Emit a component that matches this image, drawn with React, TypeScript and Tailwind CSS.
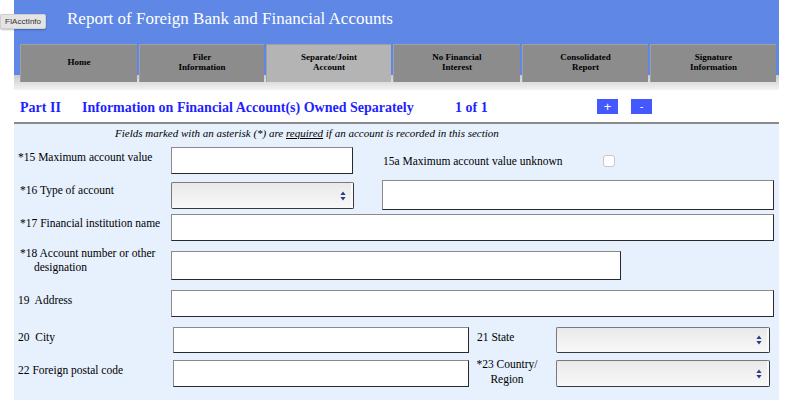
import React from 'react';

const tabs = [
  { label: ['Home'], w: 'w-[117px]' },
  { label: ['Filer', 'Information'], w: 'w-[125px]' },
  { label: ['Separate/Joint', 'Account'], w: 'w-[125px]', active: true },
  { label: ['No Financial', 'Interest'], w: 'w-[127px]' },
  { label: ['Consolidated', 'Report'], w: 'w-[126px]' },
  { label: ['Signature', 'Information'], w: 'w-[126px]' },
];

const TextBox = ({ className }: { className: string }) => (
  <div
    className={`bg-white border border-t-[#8a8a8a] border-l-[#8a8a8a] border-r-[#2a2a2a] border-b-[#2a2a2a] ${className}`}
  />
);

const SelectBox = ({ className }: { className: string }) => (
  <div
    className={`flex items-center justify-end pr-[7px] rounded-[2px] border border-t-[#7a7a7a] border-l-[#7a7a7a] border-r-[#3a3a3a] border-b-[#3a3a3a] bg-[linear-gradient(to_bottom,#e9e9e9,#f8f8f8)] shadow-[inset_-2px_0_0_#fafafa] ${className}`}
  >
    <svg width="6" height="10" viewBox="0 0 6 10">
      <path d="M3 0.5 L5.6 4 L0.4 4 Z" fill="#2a3a8a" />
      <path d="M3 9.5 L5.6 6 L0.4 6 Z" fill="#2a3a8a" />
    </svg>
  </div>
);

export default function App() {
  return (
    <div className="relative w-[800px] h-[403px] bg-white font-['Liberation_Serif',serif]">
      {/* tooltip */}
      <div className="absolute left-0 top-[14px] z-10 h-[15px] px-[4px] flex items-center bg-[#e4e4e4] border border-[#cfcfcf] rounded-[2px] shadow-[0_1px_2px_rgba(0,0,0,0.25)] font-['Liberation_Sans',sans-serif] text-[8px] text-[#333]">
        FIAcctInfo
      </div>

      <div className="ml-[14px] w-[765px]">
        {/* Header */}
        <div className="h-[90px] bg-[linear-gradient(to_bottom,#5e87e6_0px,#5e87e6_75px,#c9c9c9_75px,#f3f3f3_90px)]">
          <div className="pl-[53px] pt-[8px] h-[44px] text-[17px] leading-[22px] text-white">
            Report of Foreign Bank and Financial Accounts
          </div>
          <div className="flex gap-[2px] pl-[6px]">
            {tabs.map((t) => (
              <div
                key={t.label[0]}
                className={`${t.w} h-[38px] pb-[4px] flex flex-col items-center justify-center text-[9px] leading-[10px] font-bold text-black border-t border-l border-[#a0a0a0] ${
                  t.active ? 'bg-[#b4b4b4]' : 'bg-[#8c8c8c]'
                }`}
              >
                {t.label.map((l) => (
                  <span key={l}>{l}</span>
                ))}
              </div>
            ))}
          </div>
        </div>

        {/* Part II */}
        <div className="h-[34px] flex items-start pt-[10px] pl-[6px] border-b-2 border-[#8a8a8a] text-[#1f1fff] font-bold text-[14px] leading-[16px]">
          <span className="w-[62px]">Part II</span>
          <span className="w-[373px]">Information on Financial Account(s) Owned Separately</span>
          <span className="w-[142px]">1 of 1</span>
          <button className="w-[21px] h-[15px] mt-[-1px] bg-[#4358ff] text-white text-[13px] leading-[15px] font-normal font-['Liberation_Sans',sans-serif] mr-[13px]">
            +
          </button>
          <button className="w-[21px] h-[15px] mt-[-1px] bg-[#4358ff] text-white text-[11px] leading-[13px] font-normal font-['Liberation_Sans',sans-serif]">
            -
          </button>
        </div>

        {/* Form */}
        <div className="h-[276px] bg-[#e7f0fd] pl-[4px] text-[11.5px] leading-[13px] text-black">
          <div className="pl-[97px] pt-[3px] h-[23px] italic text-[11px] leading-[12px]">
            Fields marked with an asterisk (*) are <span className="underline">required</span> if an account is recorded in this section
          </div>

          {/* 15 */}
          <div className="flex items-start">
            <div className="w-[153px] pt-[4px]">*15 Maximum account value</div>
            <TextBox className="w-[182px] h-[27px]" />
            <div className="ml-[30px] pt-[8px] w-[220px]">15a Maximum account value unknown</div>
            <div className="mt-[8px] w-[12px] h-[12px] bg-white rounded-[3px] border border-[#c8c8c8]" />
          </div>

          {/* 16 */}
          <div className="flex items-start mt-[6px]">
            <div className="w-[153px] pl-[2px] pt-[4px]">*16 Type of account</div>
            <SelectBox className="w-[183px] h-[27px] mt-[2px]" />
            <TextBox className="ml-[28px] w-[392px] h-[30px]" />
          </div>

          {/* 17 */}
          <div className="flex items-start mt-[4px]">
            <div className="w-[153px] pl-[2px] pt-[3px]">*17 Financial institution name</div>
            <TextBox className="w-[603px] h-[27px]" />
          </div>

          {/* 18 */}
          <div className="flex items-start mt-[10px]">
            <div className="w-[153px] pl-[2px] -mt-[5px] leading-[14px]">
              <div>*18 Account number or other</div>
              <div className="pl-[14px]">designation</div>
            </div>
            <TextBox className="w-[450px] h-[29px]" />
          </div>

          {/* 19 */}
          <div className="flex items-start mt-[10px]">
            <div className="w-[153px] pt-[4px]">19&nbsp; Address</div>
            <TextBox className="w-[603px] h-[27px]" />
          </div>

          {/* 20 / 21 */}
          <div className="flex items-start mt-[10px]">
            <div className="w-[155px] pt-[4px]">20&nbsp; City</div>
            <TextBox className="w-[296px] h-[26px]" />
            <div className="ml-[8px] w-[79px] pt-[4px]">21 State</div>
            <SelectBox className="w-[214px] h-[26px]" />
          </div>

          {/* 22 / 23 */}
          <div className="flex items-start mt-[7px]">
            <div className="w-[155px] pt-[4px]">22 Foreign postal code</div>
            <TextBox className="w-[296px] h-[27px]" />
            <div className="ml-[6px] w-[64px] mr-[17px] -mt-[3px] text-center leading-[15px]">
              <div>*23 Country/</div>
              <div>Region</div>
            </div>
            <SelectBox className="w-[214px] h-[27px]" />
          </div>
        </div>
      </div>
    </div>
  );
}
